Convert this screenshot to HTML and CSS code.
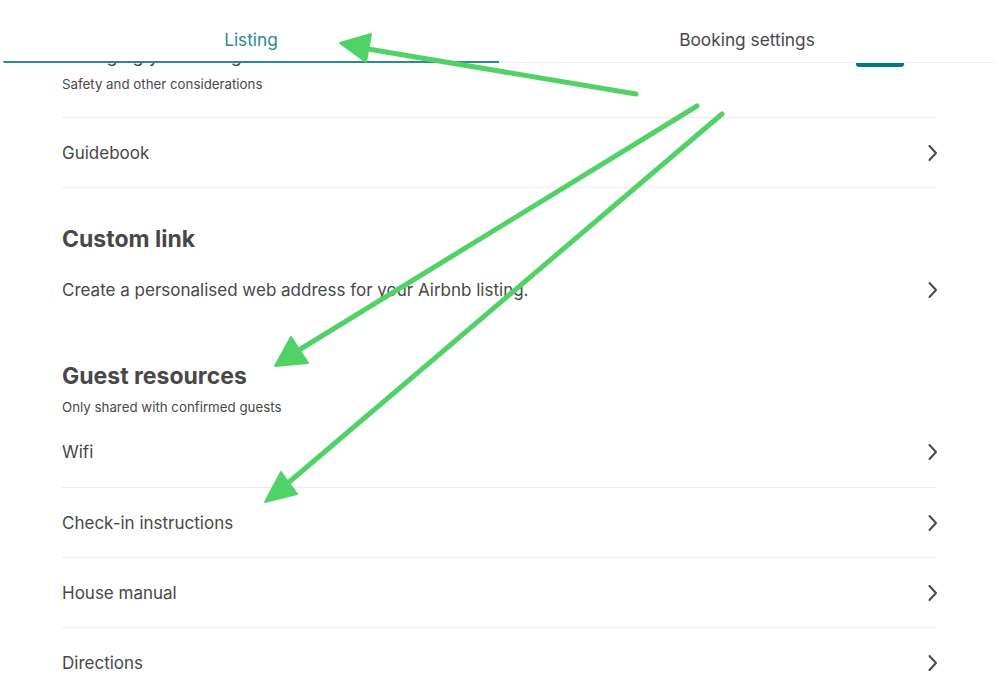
FILE: index.html
```html
<!DOCTYPE html>
<html lang="en">
<head>
  <meta charset="UTF-8" />
  <meta name="viewport" content="width=device-width, initial-scale=1" />
  <title>Listing details</title>
  <link rel="stylesheet" href="styles.css">
</head>
<body>

  <div class="tabs">
    <div class="tab active">Listing</div>
    <div class="tab">Booking settings</div>
  </div>

  <!-- bottom of the block scrolled under the tab bar -->
  <div class="peek">
    <span class="peek-title">Changing your listing</span>
    <span class="peek-button"></span>
  </div>

  <div class="content">
    <p class="note first">Safety and other considerations</p>

    <div class="row">
      <span>Guidebook</span>
      <svg class="chevron" viewBox="0 0 12 18"><path d="M2.5 2 L9 9 L2.5 16" /></svg>
    </div>

    <h2 class="title custom">Custom link</h2>
    <div class="row plain desc">
      <span>Create a personalised web address for your Airbnb listing.</span>
      <svg class="chevron" viewBox="0 0 12 18"><path d="M2.5 2 L9 9 L2.5 16" /></svg>
    </div>

    <h2 class="title guest">Guest resources</h2>
    <p class="note">Only shared with confirmed guests</p>

    <div class="row first-row">
      <span>Wifi</span>
      <svg class="chevron" viewBox="0 0 12 18"><path d="M2.5 2 L9 9 L2.5 16" /></svg>
    </div>
    <div class="row">
      <span>Check-in instructions</span>
      <svg class="chevron" viewBox="0 0 12 18"><path d="M2.5 2 L9 9 L2.5 16" /></svg>
    </div>
    <div class="row">
      <span>House manual</span>
      <svg class="chevron" viewBox="0 0 12 18"><path d="M2.5 2 L9 9 L2.5 16" /></svg>
    </div>
    <div class="row plain">
      <span>Directions</span>
      <svg class="chevron" viewBox="0 0 12 18"><path d="M2.5 2 L9 9 L2.5 16" /></svg>
    </div>
  </div>

  <!-- annotation arrows drawn over the screenshot -->
  <svg class="arrows" viewBox="0 0 999 698">
    <line x1="636" y1="94" x2="368" y2="49" />
    <polygon points="340,43 371,34 366,62" />
    <line x1="697" y1="106" x2="299" y2="350" />
    <polygon points="275,366 291,337 308,363" />
    <line x1="722" y1="114" x2="288" y2="483" />
    <polygon points="265,502 281,472 297,494" />
  </svg>

</body>
</html>
```

FILE: styles.css
```css
body {
  margin: 0;
  font-family: "Inter", "Noto Sans", sans-serif;
  color: #484848;
  background: #fff;
  position: relative;
  height: 698px;
  overflow: hidden;
}

/* Tabs */
.tabs {
  display: flex;
  padding: 0 4px 0 3px;
}

.tab {
  flex: 1;
  text-align: center;
  font-size: 17.3px;
  line-height: 24px;
  padding: 28px 0 10px;
  border-bottom: 1px solid #ebebeb;
}

.tab.active {
  color: #2b8a8e;
  padding-bottom: 9px;
  border-bottom: 2px solid #2b8a8e;
  border-bottom-left-radius: 2px;
}

/* Scrolled-away block */
.peek {
  height: 4px;
  overflow: hidden;
  display: flex;
  align-items: flex-end;
  justify-content: space-between;
  padding: 0 95px 0 62px;
}

.peek-title {
  font-size: 18px;
  line-height: 23px;
  flex-shrink: 0;
}

.peek-button {
  width: 48px;
  height: 36px;
  background: #007a80;
  border-radius: 3px;
  flex-shrink: 0;
}

/* Content */
.content {
  padding: 0 63px 0 62px;
}

.note {
  margin: 7px 0 0;
  font-size: 13.3px;
  line-height: 19px;
}

.note.first {
  margin-top: 8px;
  padding-bottom: 23px;
  border-bottom: 1px solid #ebebeb;
}

.row {
  display: flex;
  align-items: center;
  justify-content: space-between;
  height: 69px;
  font-size: 17px;
  border-bottom: 1px solid #ebebeb;
}

.row.first-row {
  height: 70px;
}

.row.plain {
  border-bottom: none;
}

.row.desc {
  height: 72px;
}

.chevron {
  width: 12px;
  height: 18px;
  flex-shrink: 0;
  margin-right: -3px;
}

.chevron path {
  fill: none;
  stroke: #484848;
  stroke-width: 2;
  stroke-linecap: round;
  stroke-linejoin: round;
}

.title {
  margin: 0;
  font-size: 23px;
  line-height: 30px;
  font-weight: 700;
}

.title.custom {
  margin-top: 36px;
}

.title.guest {
  margin-top: 35px;
}

/* Annotation overlay */
.arrows {
  position: absolute;
  top: 0;
  left: 0;
  width: 999px;
  height: 698px;
  pointer-events: none;
}

.arrows line {
  stroke: #51d266;
  stroke-width: 5;
  stroke-linecap: round;
}

.arrows polygon {
  fill: #51d266;
  stroke: #51d266;
  stroke-width: 2;
  stroke-linejoin: round;
}
```
